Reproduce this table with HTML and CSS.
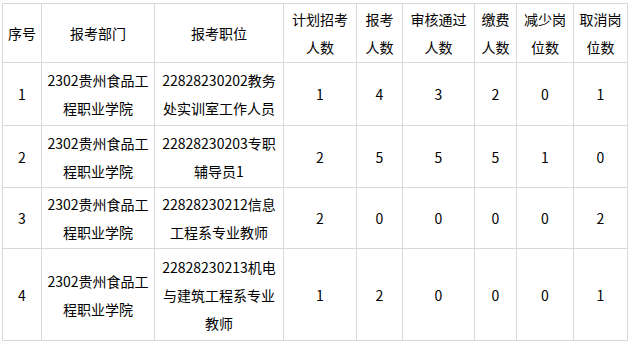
FILE: index.html
```html
<!DOCTYPE html>
<html lang="zh-CN">
    <head>
        <meta charset="UTF-8">
        <title>岗位报考情况</title>
        <link rel="stylesheet" href="styles.css">
    </head>
    <body>
        <table class="report">
            <colgroup>
                <col class="c-no">
                <col class="c-dept">
                <col class="c-post">
                <col class="c-plan">
                <col class="c-apply">
                <col class="c-pass">
                <col class="c-paid">
                <col class="c-cut">
                <col class="c-cancel">
            </colgroup>
            <tr class="head">
                <td>序号</td>
                <td>报考部门</td>
                <td>报考职位</td>
                <td>计划招考<br>人数</td>
                <td>报考<br>人数</td>
                <td>审核通过<br>人数</td>
                <td>缴费<br>人数</td>
                <td>减少岗<br>位数</td>
                <td>取消岗<br>位数</td>
            </tr>
            <tr class="r1">
                <td>1</td>
                <td>2302贵州食品工<br>程职业学院</td>
                <td>22828230202教务<br>处实训室工作人员</td>
                <td>1</td>
                <td>4</td>
                <td>3</td>
                <td>2</td>
                <td>0</td>
                <td>1</td>
            </tr>
            <tr class="r2">
                <td>2</td>
                <td>2302贵州食品工<br>程职业学院</td>
                <td>22828230203专职<br>辅导员1</td>
                <td>2</td>
                <td>5</td>
                <td>5</td>
                <td>5</td>
                <td>1</td>
                <td>0</td>
            </tr>
            <tr class="r3">
                <td>3</td>
                <td>2302贵州食品工<br>程职业学院</td>
                <td>22828230212信息<br>工程系专业教师</td>
                <td>2</td>
                <td>0</td>
                <td>0</td>
                <td>0</td>
                <td>0</td>
                <td>2</td>
            </tr>
            <tr class="r4">
                <td>4</td>
                <td>2302贵州食品工<br>程职业学院</td>
                <td>22828230213机电<br>与建筑工程系专业<br>教师</td>
                <td>1</td>
                <td>2</td>
                <td>0</td>
                <td>0</td>
                <td>0</td>
                <td>1</td>
            </tr>
        </table>
    </body>
</html>
```

FILE: styles.css
```css
* {
    margin: 0;
    padding: 0;
    box-sizing: border-box;
}

body {
    background: #fff;
    color: #000;
    font-family: "Noto Sans CJK SC", "Liberation Sans", sans-serif;
    font-size: 14px;
    padding: 3px 0 0 2px;
}

.report {
    border-collapse: collapse;
    table-layout: fixed;
    width: 626px;
}

.report td {
    border: 1px solid #d9d9d9;
    text-align: center;
    vertical-align: middle;
    line-height: 28px;
    padding: 0;
    white-space: nowrap;
    overflow: hidden;
}

.c-no { width: 39px; }
.c-dept { width: 113px; }
.c-post { width: 129px; }
.c-plan { width: 73px; }
.c-apply { width: 46px; }
.c-pass { width: 72px; }
.c-paid { width: 42px; }
.c-cut { width: 57px; }
.c-cancel { width: 54px; }

.head { height: 59px; }
.r1 { height: 63px; }
.r2 { height: 62px; }
.r3 { height: 61px; }
.r4 { height: 92px; }
```
